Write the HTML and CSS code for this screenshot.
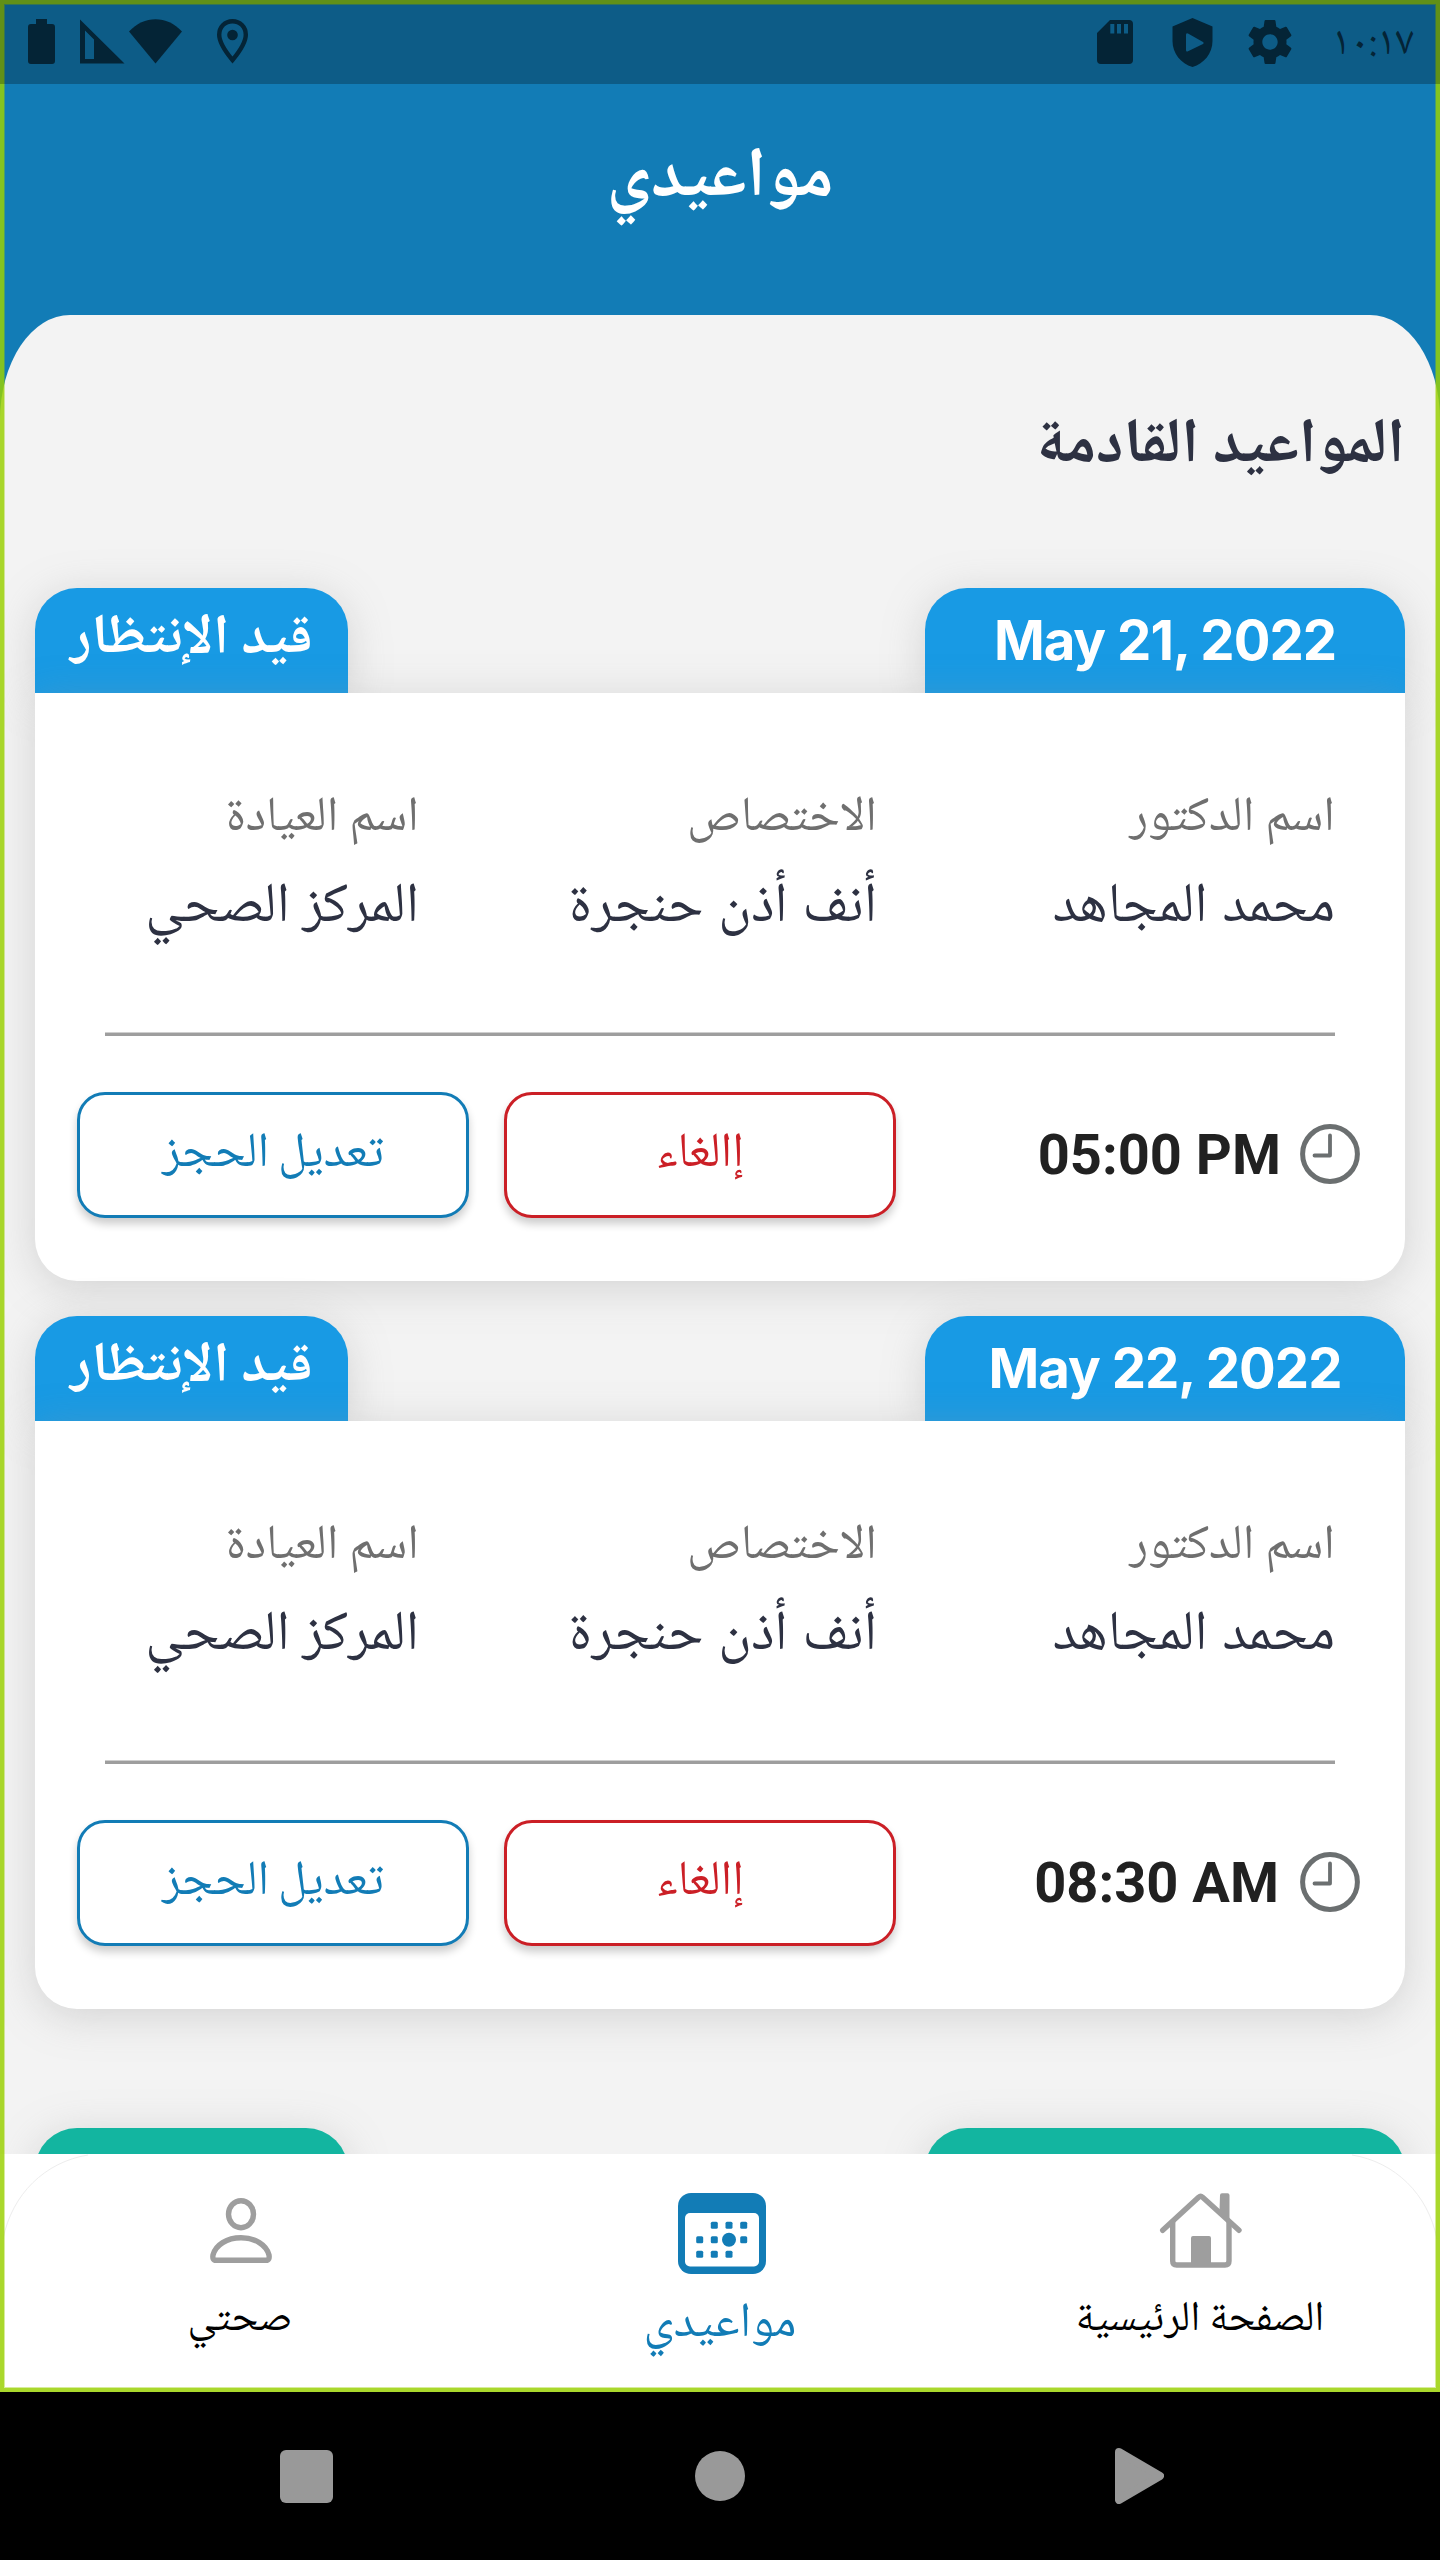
FILE: index.html
```
<!DOCTYPE html>
<html lang="ar" dir="rtl">
<head>
<meta charset="utf-8">
<title>مواعيدي</title>
<link rel="stylesheet" href="styles.css">
</head>
<body>
<svg class="sprite" aria-hidden="true">
  <symbol id="clock" viewBox="0 0 60 60">
    <circle cx="30" cy="30" r="27.4" fill="none" stroke="#6b6f70" stroke-width="5"/>
    <path d="M30 11.5V31.5H14.5" fill="none" stroke="#6b6f70" stroke-width="3.8" stroke-linecap="round" stroke-linejoin="round"/>
  </symbol>
</svg>
<div class="phone">
  <div class="app">
    <div class="status" dir="ltr">
      <svg class="battery" width="27" height="45" viewBox="0 0 27 45"><path d="M8 0h11v5h5a3 3 0 0 1 3 3v34a3 3 0 0 1-3 3H3a3 3 0 0 1-3-3V8a3 3 0 0 1 3-3h5z"/></svg>
      <svg class="signal" width="45" height="45" viewBox="0 0 45 45"><path fill-rule="evenodd" d="M0 .5L44.5 44.500H0zM5 11.500V40h9V20.500z"/></svg>
      <svg class="wifi" width="53" height="45" viewBox="0 0 53 45"><path d="M0 12.500C15-4 38-4 53 12.500L26.500 44.500z"/></svg>
      <svg class="pin" width="31" height="45" viewBox="0 0 31 45"><path d="M15.500 2.200C8 2.200 2.200 8 2.200 15.700C2.200 25 10.500 35 15.500 41C20.500 35 28.800 25 28.800 15.700C28.800 8 23 2.200 15.500 2.200z" fill="none" stroke="#042436" stroke-width="4.400"/><circle cx="15.500" cy="16" r="5.300"/></svg>
      <svg class="sd" width="36" height="44" viewBox="0 0 36 44"><path fill-rule="evenodd" d="M13 0H32a4 4 0 0 1 4 4V40a4 4 0 0 1-4 4H4a4 4 0 0 1-4-4V13zM13.300 4v9.500h4V4zM20 4v9.500h4V4zM27 4v9.500h4V4z"/></svg>
      <svg class="shield" width="41" height="49" viewBox="0 0 41 49"><path fill-rule="evenodd" d="M20.500 0L40.500 8.500V23C40.500 35 32 46 20.500 49C9 46 .5 35 .5 23V8.500zM14 17v15q0 2.200 2 1.200l15-7.300q1.600-1 0-2L16 15.600q-2-1-2 1.400z"/></svg>
      <svg class="gear" width="44" height="44" viewBox="2 2 20 20"><path d="M19.430 12.980c.04-.32.07-.64.07-.98s-.03-.66-.07-.98l2.110-1.650c.19-.15.24-.42.12-.64l-2-3.460c-.12-.22-.39-.3-.61-.22l-2.490 1c-.52-.4-1.080-.73-1.690-.98l-.38-2.650C14.460 2.180 14.250 2 14 2h-4c-.25 0-.46.18-.49.42l-.38 2.650c-.61.25-1.170.59-1.690.98l-2.490-1c-.23-.09-.49 0-.61.22l-2 3.460c-.13.22-.07.49.12.64l2.110 1.650c-.04.32-.07.65-.07.98s.03.66.07.98l-2.110 1.650c-.19.15-.24.42-.12.64l2 3.460c.12.22.39.3.61.22l2.490-1c.52.4 1.080.73 1.690.98l.38 2.650c.03.24.24.42.49.42h4c.25 0 .46-.18.49-.42l.38-2.650c.61-.25 1.170-.59 1.690-.98l2.490 1c.23.09.49 0 .61-.22l2-3.460c.12-.22.07-.49-.12-.64l-2.110-1.650zM12 15.500c-1.930 0-3.500-1.570-3.500-3.500s1.570-3.500 3.500-3.500 3.500 1.570 3.500 3.500-1.570 3.500-3.500 3.500z"/></svg>
      <span class="status-time">١٠:١٧</span>
    </div>

    <header class="header"><h1 class="title">مواعيدي</h1></header>

    <main class="panel">
      <h2 class="heading">المواعيد القادمة</h2>

      <article class="card">
        <div class="tabs">
          <div class="tab tab-date" dir="ltr">May 21, 2022</div>
          <div class="tab tab-state">قيد الإنتظار</div>
        </div>
        <div class="body">
          <div class="info">
            <div><div class="label">اسم الدكتور</div><div class="value value-loose">محمد المجاهد</div></div>
            <div><div class="label">الاختصاص</div><div class="value value-loose">أنف أذن حنجرة</div></div>
            <div><div class="label">اسم العيادة</div><div class="value">المركز الصحي</div></div>
          </div>
          <div class="divider"></div>
          <div class="actions">
            <svg class="clock"><use href="#clock"/></svg>
            <span class="time" dir="ltr">05:00 PM</span>
            <button class="btn btn-cancel">إالغاء</button>
            <button class="btn btn-edit">تعديل الحجز</button>
          </div>
        </div>
      </article>

      <article class="card">
        <div class="tabs">
          <div class="tab tab-date" dir="ltr">May 22, 2022</div>
          <div class="tab tab-state">قيد الإنتظار</div>
        </div>
        <div class="body">
          <div class="info">
            <div><div class="label">اسم الدكتور</div><div class="value value-loose">محمد المجاهد</div></div>
            <div><div class="label">الاختصاص</div><div class="value value-loose">أنف أذن حنجرة</div></div>
            <div><div class="label">اسم العيادة</div><div class="value">المركز الصحي</div></div>
          </div>
          <div class="divider"></div>
          <div class="actions">
            <svg class="clock"><use href="#clock"/></svg>
            <span class="time time-am" dir="ltr">08:30 AM</span>
            <button class="btn btn-cancel">إالغاء</button>
            <button class="btn btn-edit">تعديل الحجز</button>
          </div>
        </div>
      </article>

      <article class="card card-done">
        <div class="tabs">
          <div class="tab tab-date"></div>
          <div class="tab tab-state"></div>
        </div>
      </article>
    </main>

    <nav class="nav">
      <div class="nav-item">
        <svg width="96" height="90" viewBox="0 0 96 90" fill="none" stroke="#9e9e9e" stroke-width="5.400" stroke-linejoin="round" stroke-linecap="round">
          <path d="M10.700 46.300L46.600 13.200Q48.600 11.500 50.600 13.200L87 46.300"/>
          <path d="M20.700 37V77Q20.700 81 24.700 81H73Q77 81 77 77V37" stroke-linecap="butt"/>
          <path d="M68 11.200a2 2 0 0 1 2-2h5.500a2 2 0 0 1 2 2V36L67.500 27zM39 54a2 2 0 0 1 2-2H57a2 2 0 0 1 2 2V81H39z" fill="#9e9e9e" stroke="none"/>
        </svg>
        <span class="nav-label">الصفحة الرئيسية</span>
      </div>
      <div class="nav-item nav-active">
        <svg width="96" height="90" viewBox="0 0 96 90" fill="#127cb6">
          <rect x="6" y="9" width="88" height="81" rx="13"/>
          <rect x="13" y="29" width="74" height="53.500" rx="5" fill="#fff"/>
          <g>
            <rect x="38.800" y="37.800" width="7" height="7" rx="1.500"/><rect x="53.500" y="37.800" width="7" height="7" rx="1.500"/><rect x="68.200" y="37.800" width="7" height="7" rx="1.500"/>
            <rect x="24.200" y="52.300" width="7" height="7" rx="1.500"/><rect x="38.800" y="52.300" width="7" height="7" rx="1.500"/><circle cx="57" cy="55.800" r="7"/><rect x="68.200" y="52.300" width="7" height="7" rx="1.500"/>
            <rect x="24.200" y="66.800" width="7" height="7" rx="1.500"/><rect x="38.800" y="66.800" width="7" height="7" rx="1.500"/><rect x="53.500" y="66.800" width="7" height="7" rx="1.500"/>
          </g>
        </svg>
        <span class="nav-label">مواعيدي</span>
      </div>
      <div class="nav-item">
        <svg width="96" height="90" viewBox="0 0 96 90" fill="none" stroke="#9e9e9e" stroke-width="5.400">
          <ellipse cx="49" cy="30.200" rx="12.500" ry="13.500"/>
          <path d="M24 76.300C21 76.300 20.500 74 21 71C23.500 61 35 53.700 49 53.700S74.500 61 77 71C77.500 74 77 76.300 74 76.300Z"/>
        </svg>
        <span class="nav-label">صحتي</span>
      </div>
      <svg class="nav-edge" viewBox="0 0 1440 90" fill="none" stroke="#ededed"><path d="M3 85C12 40 45 8 88 1M1437 85C1428 40 1395 8 1352 1"/></svg>
    </nav>
    <div class="frame"></div>
  </div>

  <div class="system" dir="ltr">
    <div class="recent"></div>
    <div class="home"></div>
    <svg width="49" height="56" viewBox="0 0 49 56"><path d="M4 4L45 28L4 52z" fill="#999" stroke="#999" stroke-width="8" stroke-linejoin="round"/></svg>
  </div>
</div>
</body>
</html>
```
FILE: styles.css
```
* { box-sizing: border-box; margin: 0; padding: 0; }

body {
  font-family: "Noto Naskh Arabic", "DejaVu Sans", serif;
  background: #000;
}

.sprite { position: absolute; width: 0; height: 0; }

.phone {
  width: 1440px;
  height: 2560px;
  display: flex;
  flex-direction: column;
  overflow: hidden;
}

.app {
  position: relative;
  height: 2392px;
  display: flex;
  flex-direction: column;
  background: #127cb6;
}

/* status bar: lies over the app and its green frame */
.status {
  position: absolute;
  inset: 0 0 auto 0;
  z-index: 3;
  height: 84px;
  display: flex;
  align-items: flex-start;
  padding: 19px 25px 0 28px;
  background: rgba(0, 0, 0, .26);
  color: #042436;
  fill: #042436;
}
.signal { margin-left: 25px; }
.wifi { margin-left: 4px; }
.pin { margin-left: 35px; }
.sd { margin: 1px 0 0 auto; }
.shield { margin: -1px 0 0 39px; }
.gear { margin: 1px 0 0 35px; }
.status-time {
  width: 84px;
  margin-left: 39px;
  font-size: 41px;
  line-height: 52px;
  text-align: center;
  white-space: nowrap;
}

.frame {
  position: absolute;
  inset: 0;
  z-index: 2;
  border: 4px solid rgba(154, 208, 4, .84);
  box-shadow: inset 0 0 0 1px rgba(154, 208, 4, .4);
  pointer-events: none;
}

.header {
  height: 315px;
  flex: none;
  padding-top: 139px;
}
.title {
  color: #fff;
  font-size: 70px;
  font-weight: 700;
  line-height: 84px;
  text-align: center;
}

.panel {
  height: 1839px;
  flex: none;
  display: flex;
  flex-direction: column;
  gap: 35px;
  padding: 94px 35px 0;
  overflow: hidden;
  background: #f3f3f3;
  border-radius: 70px 70px 0 0 / 105px 105px 0 0;
}
.heading {
  margin-bottom: 64px;
  color: #2d3142;
  font-size: 63px;
  font-weight: 700;
  line-height: 80px;
}

.card { display: flex; flex-direction: column; flex: none; }
.card-done { margin-top: 84px; }

.tabs { display: flex; justify-content: space-between; }
.tab {
  height: 105px;
  border-radius: 42px 42px 0 0;
  background: #189ae4;
  box-shadow: 0 7px 42px rgba(150, 150, 150, .34);
  color: #fff;
  font-size: 56px;
  font-weight: 700;
  line-height: 106px;
  text-align: center;
}
.tab-date {
  width: 480px;
  font-family: Inter, sans-serif;
  font-size: 54.500px;
  font-weight: 650;
  letter-spacing: -1px;
  line-height: 105px;
}
.tab-state { width: 313px; }
.card-done .tab { background: #13b5a0; }

.body {
  height: 588px;
  padding: 85px 0 0;
  background: #fff;
  border-radius: 0 0 42px 42px;
  box-shadow: 0 7px 42px rgba(150, 150, 150, .34);
}
.info {
  display: grid;
  grid-template-columns: 458px 458px 1fr;
  padding-right: 70px;
}
.label {
  color: #6f6f6f;
  font-size: 49px;
  line-height: 84px;
}
.value {
  margin-top: -1px;
  color: #2d3142;
  font-size: 56px;
  line-height: 96px;
}
.value-loose { word-spacing: 2.500px; }

.divider {
  height: 4px;
  margin: 75px 70px 56px;
  border-top: 1px solid #cfcfcf;
  background: #9e9e9e;
}

.actions {
  display: flex;
  align-items: center;
  padding: 0 45px 0 42px;
}
.clock { width: 60px; height: 60px; margin-top: -3px; }
.time {
  margin-right: 19px;
  color: #212121;
  font: 700 56px/66px Roboto, sans-serif;
}
.time-am { margin-right: 21px; }
.btn {
  width: 392px;
  height: 126px;
  padding-top: 1px;
  background: #fff;
  border: 3px solid currentColor;
  border-radius: 28px;
  box-shadow: 0 6px 9px rgba(0, 0, 0, .2);
  font-family: inherit;
  font-size: 49px;
  line-height: 119px;
}
.btn-cancel { margin-right: auto; color: #cb1f26; }
.btn-edit { margin-right: 35px; color: #127cb6; word-spacing: -2px; }

.nav {
  position: relative;
  height: 238px;
  display: grid;
  grid-template-columns: repeat(3, 1fr);
  background: #fff;
}
.nav-edge { position: absolute; top: 0; left: 0; width: 1440px; height: 90px; }
.nav-item {
  display: flex;
  flex-direction: column;
  align-items: center;
  gap: 11px;
  padding-top: 30px;
}
.nav-label { color: #000; font-size: 42px; line-height: 72px; }
.nav-active .nav-label { color: #127cb6; font-size: 49px; line-height: 82px; }

.system {
  flex: 1;
  display: flex;
  align-items: center;
  padding: 0 0 0 280px;
  background: #000;
}
.recent { width: 53px; height: 53px; border-radius: 6px; background: #999; }
.home { width: 50px; height: 50px; margin: 0 370px 0 362px; border-radius: 50%; background: #999; }
```
